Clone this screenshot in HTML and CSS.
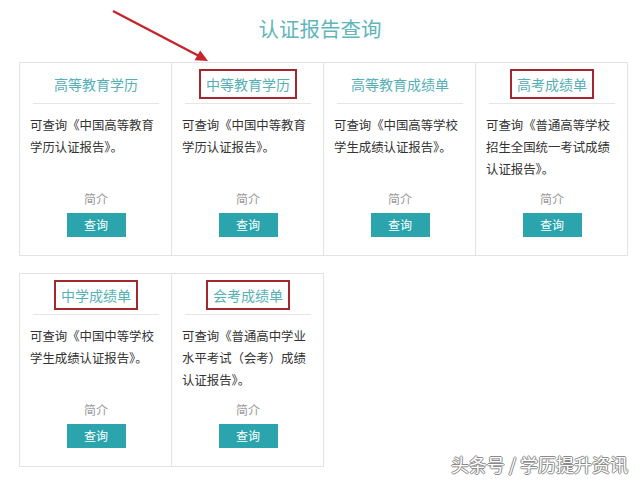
FILE: index.html
```html
<!DOCTYPE html>
<html lang="zh-CN">
<head>
<meta charset="utf-8">
<title>认证报告查询</title>
<link rel="stylesheet" href="styles.css">
</head>
<body>
<div class="page">
  <h1 class="heading">认证报告查询</h1>
  <div class="row">
    <div class="card">
      <div class="head"><span class="title">高等教育学历</span></div>
      <p class="desc">可查询《中国高等教育学历认证报告》。</p>
      <div class="more"><div class="intro">简介</div><span class="btn">查询</span></div>
    </div>
    <div class="card">
      <div class="head"><span class="title mark">中等教育学历</span></div>
      <p class="desc">可查询《中国中等教育学历认证报告》。</p>
      <div class="more"><div class="intro">简介</div><span class="btn">查询</span></div>
    </div>
    <div class="card">
      <div class="head"><span class="title">高等教育成绩单</span></div>
      <p class="desc">可查询《中国高等学校学生成绩认证报告》。</p>
      <div class="more"><div class="intro">简介</div><span class="btn">查询</span></div>
    </div>
    <div class="card">
      <div class="head"><span class="title mark">高考成绩单</span></div>
      <p class="desc">可查询《普通高等学校招生全国统一考试成绩认证报告》。</p>
      <div class="more"><div class="intro">简介</div><span class="btn">查询</span></div>
    </div>
  </div>
  <div class="row row2">
    <div class="card">
      <div class="head"><span class="title mark">中学成绩单</span></div>
      <p class="desc">可查询《中国中等学校学生成绩认证报告》。</p>
      <div class="more"><div class="intro">简介</div><span class="btn">查询</span></div>
    </div>
    <div class="card">
      <div class="head"><span class="title mark">会考成绩单</span></div>
      <p class="desc">可查询《普通高中学业水平考试（会考）成绩认证报告》。</p>
      <div class="more"><div class="intro">简介</div><span class="btn">查询</span></div>
    </div>
  </div>
  <svg class="arrow" width="640" height="80" viewBox="0 0 640 80">
    <line x1="113" y1="11" x2="199" y2="56" stroke="#c4262b" stroke-width="2.5"/>
    <polygon points="208,61 194.6,60.2 200.2,50.6" fill="#c4262b"/>
  </svg>
  <div class="watermark">头条号 / 学历提升资讯</div>
</div>
</body>
</html>
```
FILE: styles.css
```css
* { box-sizing: border-box; }
html, body { margin: 0; padding: 0; background: #fff; }
body { font-family: "Noto Sans CJK SC", "Noto Sans", sans-serif; }
.page { position: relative; width: 640px; height: 481px; overflow: hidden; }
.heading {
  margin: 0;
  padding-top: 14px;
  height: 62px;
  font-size: 20.5px;
  line-height: 28px;
  font-weight: 400;
  color: #5fb6ba;
  text-align: center;
}
.row { display: flex; margin-left: 19px; }
.row2 { margin-top: 17px; }
.card {
  width: 153px;
  height: 194px;
  border: 1px solid #e3e3e3;
  padding: 0 9px 18px 10px;
  display: flex;
  flex-direction: column;
}
.card + .card { margin-left: -1px; }
.head {
  margin: 0 3px;
  padding: 6px 0 4px;
  border-bottom: 1px solid #e6e6e6;
  text-align: center;
}
.title {
  display: inline-block;
  height: 30px;
  line-height: 26px;
  padding: 0 5px;
  border: 2px solid transparent;
  font-size: 14px;
  color: #55b0b6;
}
.title.mark { border-color: #a3282d; }
.desc {
  margin: 10px 0 0;
  font-size: 12.4px;
  line-height: 22px;
  color: #333;
}
.more { margin-top: auto; text-align: center; }
.intro { font-size: 12px; line-height: 18px; color: #9a9a9a; }
.btn {
  display: inline-block;
  margin-top: 5px;
  width: 59px;
  height: 24px;
  line-height: 24px;
  background: #2ba4ae;
  color: #fff;
  font-size: 12px;
}
.arrow { position: absolute; left: 0; top: 0; }
.watermark {
  position: absolute;
  right: 12px;
  top: 452px;
  font-size: 18px;
  line-height: 24px;
  color: #fff;
  text-shadow: 1px 0 0 #8a8a8a, -1px 0 0 #8a8a8a, 0 1px 0 #8a8a8a, 0 -1px 0 #8a8a8a;
}
```
